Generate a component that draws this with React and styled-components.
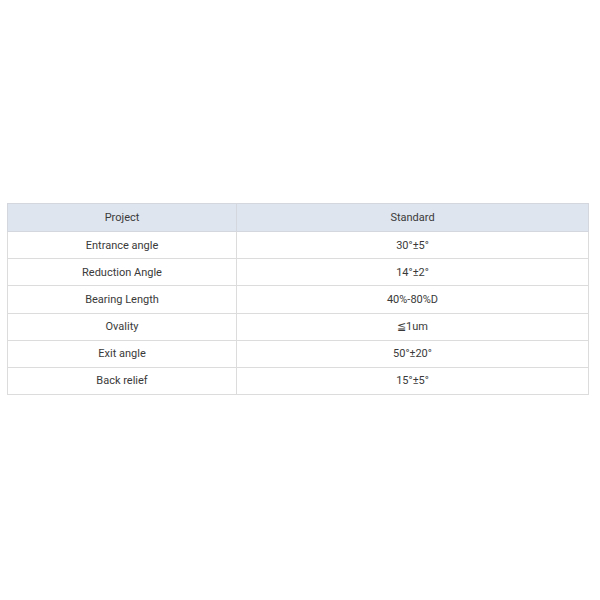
import React from 'react';
import styled, { createGlobalStyle } from 'styled-components';

const rows = [
	['Entrance angle', '30°±5°'],
	['Reduction Angle', '14°±2°'],
	['Bearing Length', '40%-80%D'],
	['Ovality', '≦1um'],
	['Exit angle', '50°±20°'],
	['Back relief', '15°±5°'],
];

const GlobalStyle = createGlobalStyle`
	body {
		margin: 0;
		background: #fff;
		font-family: Roboto, "Liberation Sans", sans-serif;
	}
`;

const Page = styled.div`
	height: 600px;
	display: flex;
	align-items: center;
	padding: 0 11px 2px 7px;
	box-sizing: border-box;
`;

const Table = styled.table`
	width: 100%;
	border-collapse: collapse;
	table-layout: fixed;
	font-size: 11px;
	color: #3a3a3a;
`;

const HeadCell = styled.th`
	font-weight: normal;
	background: #dfe5ee;
	border: 1px solid #d4d8de;
	height: 27px;
	padding: 0;
	text-align: center;
	width: ${(p) => p.width || 'auto'};
`;

const Cell = styled.td`
	border: 1px solid #dcdcdc;
	height: 26.2px;
	padding: 0;
	text-align: center;
`;

export default function App() {
	return (
		<>
			<GlobalStyle />
			<Page>
				<Table>
					<thead>
						<tr>
							<HeadCell width='228px'>Project</HeadCell>
							<HeadCell>Standard</HeadCell>
						</tr>
					</thead>
					<tbody>
						{rows.map(([name, value]) => (
							<tr key={name}>
								<Cell>{name}</Cell>
								<Cell>{value}</Cell>
							</tr>
						))}
					</tbody>
				</Table>
			</Page>
		</>
	);
}
